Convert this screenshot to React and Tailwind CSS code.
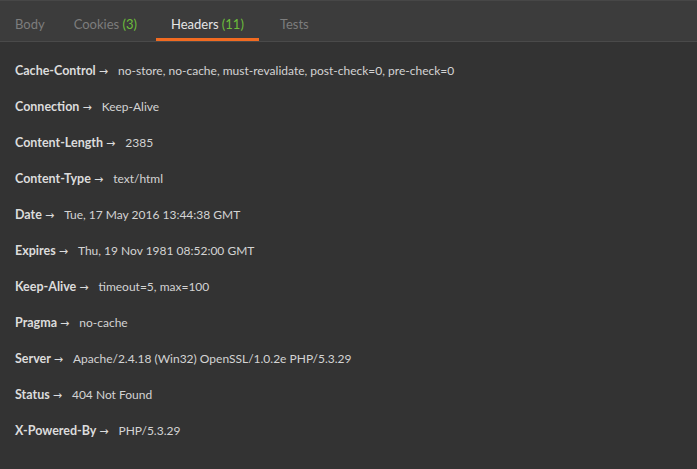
import React from "react";

const headers = [
  ["Cache-Control", "no-store, no-cache, must-revalidate, post-check=0, pre-check=0"],
  ["Connection", "Keep-Alive"],
  ["Content-Length", "2385"],
  ["Content-Type", "text/html"],
  ["Date", "Tue, 17 May 2016 13:44:38 GMT"],
  ["Expires", "Thu, 19 Nov 1981 08:52:00 GMT"],
  ["Keep-Alive", "timeout=5, max=100"],
  ["Pragma", "no-cache"],
  ["Server", "Apache/2.4.18 (Win32) OpenSSL/1.0.2e PHP/5.3.29"],
  ["Status", "404 Not Found"],
  ["X-Powered-By", "PHP/5.3.29"],
];

export default function App() {
  return (
    <div className="w-[697px] h-[469px] bg-[#333333] overflow-hidden text-[12px]" style={{ fontFamily: 'Lato, sans-serif' }}>
      <div className="h-[42px] bg-[#3c3c3c] border-t border-[#474747] border-b border-b-[#4a4a4a] flex items-stretch pl-[15px] text-[13px]">
        <div className="flex items-center text-[#7d7d7d] mr-[29px] pt-[7px]">Body</div>
        <div className="flex items-center text-[#7d7d7d] mr-[19px] pt-[7px]">Cookies&nbsp;<span className="text-[#6cbd3b]">(3)</span></div>
        <div className="relative flex items-center px-[15px] text-[#e6e6e6] pt-[7px]">
          Headers&nbsp;<span className="text-[#6cbd3b]">(11)</span>
          <div className="absolute left-0 right-0 bottom-0 h-[3px] bg-[#f26b21]" />
        </div>
        <div className="flex items-center text-[#7d7d7d] ml-[21px] pt-[7px]">Tests</div>
      </div>
      <div className="pl-[15px] pt-[19px] flex flex-col">
        {headers.map(([k, v]) => (
          <div key={k} className="h-[36px] flex items-start leading-[20px] text-[12.5px]">
            <span className="font-bold text-[#dcdcdc]">{k} <span style={{ fontFamily: '"DejaVu Sans", sans-serif' }} className="font-normal text-[11px]">→</span></span>
            <span className="ml-[10px] text-[#d4d4d4] text-[12px]">{v}</span>
          </div>
        ))}
      </div>
    </div>
  );
}
